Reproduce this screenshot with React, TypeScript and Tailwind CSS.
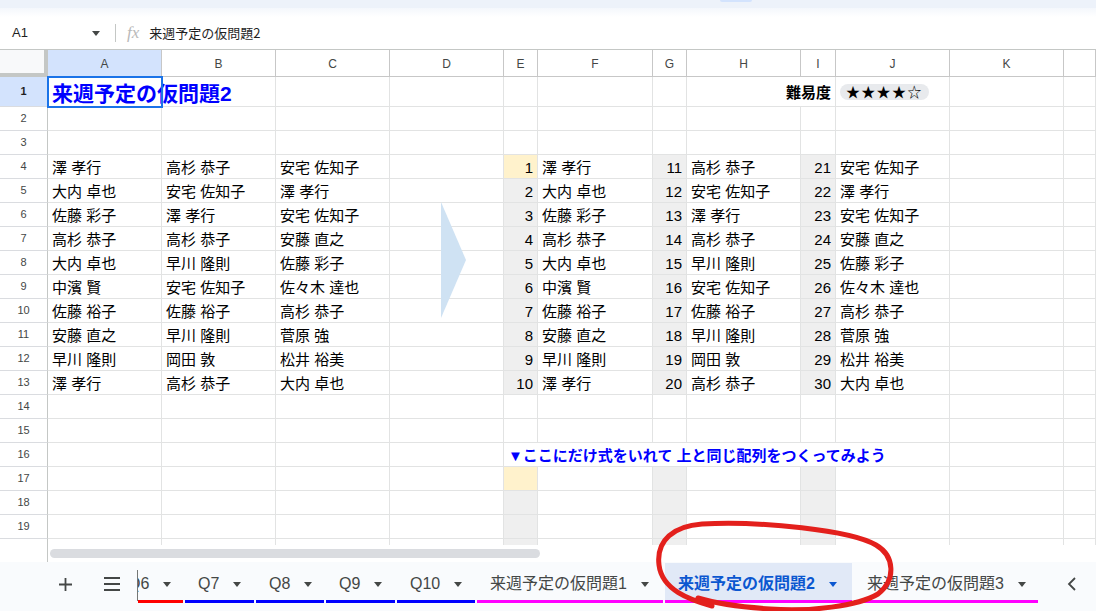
import type { ReactNode } from "react";

const COL_A = ["澤 孝行", "大内 卓也", "佐藤 彩子", "高杉 恭子", "大内 卓也", "中濱 賢", "佐藤 裕子", "安藤 直之", "早川 隆則", "澤 孝行"];
const COL_B = ["高杉 恭子", "安宅 佐知子", "澤 孝行", "高杉 恭子", "早川 隆則", "安宅 佐知子", "佐藤 裕子", "早川 隆則", "岡田 敦", "高杉 恭子"];
const COL_C = ["安宅 佐知子", "澤 孝行", "安宅 佐知子", "安藤 直之", "佐藤 彩子", "佐々木 達也", "高杉 恭子", "菅原 強", "松井 裕美", "大内 卓也"];

const LETTERS = ["A", "B", "C", "D", "E", "F", "G", "H", "I", "J", "K", ""];
const GRID = "grid grid-cols-[48px_114px_114px_114px_114px_34px_115px_34px_114px_35px_114px_114px_1fr]";

type CellSpec = { content?: ReactNode; bg?: string; right?: boolean; noR?: boolean };

function spec(r: number, c: number): CellSpec {
  if (r === 1) {
    if (c === 0)
      return {
        content: <span className="pt-[2px] text-[21px] font-bold text-[#0000ff]">来週予定の仮問題2</span>,
      };
    if (c === 7) return { noR: true };
    if (c === 8) return { content: <span className="text-[15px] font-bold text-black">難易度</span>, right: true };
    if (c === 9)
      return {
        content: (
          <span className="rounded-full bg-[#e8eaed] px-[6px] py-[1px] text-[14px] tracking-[1.3px] text-black">
            ★★★★☆
          </span>
        ),
      };
  }
  if (r >= 4 && r <= 13) {
    const i = r - 4;
    if (c === 0 || c === 5) return { content: COL_A[i] };
    if (c === 1 || c === 7) return { content: COL_B[i] };
    if (c === 2 || c === 9) return { content: COL_C[i] };
    if (c === 4) return { content: i + 1, right: true, bg: i === 0 ? "bg-[#fff2cc]" : "bg-[#efefef]" };
    if (c === 6) return { content: i + 11, right: true, bg: "bg-[#efefef]" };
    if (c === 8) return { content: i + 21, right: true, bg: "bg-[#efefef]" };
  }
  if (r === 16) {
    if (c === 4)
      return {
        content: (
          <span className="text-[15px] font-bold text-[#0000ff]">▼ここにだけ式をいれて 上と同じ配列をつくってみよう</span>
        ),
        noR: true,
      };
    if (c >= 5 && c <= 8) return { noR: true };
  }
  if (r >= 17) {
    if (c === 4) return { bg: r === 17 ? "bg-[#fff2cc]" : "bg-[#efefef]" };
    if (c === 6 || c === 8) return { bg: "bg-[#efefef]" };
  }
  return {};
}

function Row({ r }: { r: number }) {
  const sel = r === 1;
  return (
    <div className={`${GRID} ${r === 1 ? "h-[30px]" : "h-[24px]"}`}>
      <div
        className={`flex items-center justify-center border-r border-b border-r-[#c4c7c5] border-b-[#dadce0] text-[11px] ${
          sel ? "bg-[#d3e3fd] font-bold text-[#1f1f1f]" : "text-[#444746]"
        }`}
      >
        {r}
      </div>
      {LETTERS.map((_, c) => {
        const s = spec(r, c);
        return (
          <div
            key={c}
            className={`flex items-center whitespace-nowrap border-b border-[#e2e3e3] px-[4px] pt-[1px] text-[15px] leading-none text-black ${
              s.noR ? "" : "border-r"
            } ${s.right ? "justify-end" : ""} ${s.bg ?? ""}`}
          >
            {s.content}
          </div>
        );
      })}
    </div>
  );
}

function Triangle() {
  return <span className="h-0 w-0 border-x-[4px] border-t-[5px] border-x-transparent border-t-[#444746]" />;
}

function Tab({
  label,
  w,
  line,
  active,
  first,
}: {
  label: string;
  w: string;
  line: string;
  active?: boolean;
  first?: boolean;
}) {
  return (
    <div className={`flex shrink-0 flex-col ${w} ${first ? "ml-[-23px]" : ""}`}>
      <div
        className={`flex h-[37px] items-center pl-[13px] pt-[5px] text-[16px] ${
          active ? "bg-[#e1e9f7] font-bold text-[#0b57d0]" : "text-[#444746]"
        }`}
      >
        <span>{label}</span>
        <span
          className={`ml-[14px] h-0 w-0 border-x-[4px] border-t-[5px] border-x-transparent ${
            active ? "border-t-[#0b57d0]" : "border-t-[#444746]"
          }`}
        />
      </div>
      <div className={`h-[3px] ${line}`} />
    </div>
  );
}

export default function App() {
  return (
    <div className="relative h-[611px] w-[1096px] overflow-hidden bg-white font-['Liberation_Sans','Noto_Sans_CJK_JP',sans-serif] text-[#1f1f1f]">
      {/* toolbar remnant */}
      <div className="relative h-[8px] bg-[#edf2fa]">
        <div className="absolute left-[720px] top-0 h-[2px] w-[32px] rounded-b bg-[#d3e3fd]" />
      </div>
      <div className="h-[9px] bg-gradient-to-b from-[#f4f7fc] to-white" />

      {/* formula bar */}
      <div className="flex h-[32px] items-center text-[13px]">
        <span className="ml-[12px] w-[80px]">A1</span>
        <Triangle />
        <span className="ml-[15px] h-[18px] w-px bg-[#c4c7c5]" />
        <span className="ml-[11px] font-['Liberation_Serif',serif] text-[17px] italic text-[#b9b9b9]">fx</span>
        <span className="ml-[10px] font-['Noto_Sans_CJK_JP',sans-serif] text-[13px]">来週予定の仮問題2</span>
      </div>

      {/* grid */}
      <div className="h-[496px] overflow-hidden">
        <div className={`${GRID} h-[28px] border-t border-[#c4c7c5]`}>
          <div className="border-r-[4px] border-b-[4px] border-[#c4c7c5] bg-[#f8f9fa]" />
          {LETTERS.map((l, c) => (
            <div
              key={c}
              className={`flex items-center justify-center border-r border-b border-[#c7c7c7] pt-[1px] text-[12px] text-[#444746] ${
                c === 0 ? "bg-[#d3e3fd]" : ""
              }`}
            >
              {l}
            </div>
          ))}
        </div>
        {Array.from({ length: 20 }, (_, i) => (
          <Row key={i} r={i + 1} />
        ))}
      </div>

      {/* horizontal scroll */}
      <div className="flex h-[17px] items-center">
        <div className="h-full w-[48px] border-r border-[#c4c7c5]" />
        <div className="ml-[2px] h-[9px] w-[490px] rounded-full bg-[#dadce0]" />
      </div>

      {/* sheet tabs */}
      <div className="flex h-[49px] items-start bg-[#f9fbfd] pt-[1px]">
        <div className="flex h-[37px] w-[137px] items-center pt-[5px]">
          <svg className="ml-[59px]" width="13" height="13" viewBox="0 0 13 13">
            <path d="M6.5 0v13M0 6.5h13" stroke="#444746" strokeWidth="1.8" />
          </svg>
          <svg className="ml-[32px]" width="16" height="14" viewBox="0 0 16 14">
            <path d="M0 1h16M0 7h16M0 13h16" stroke="#444746" strokeWidth="1.8" />
          </svg>
        </div>
        <div className="mt-[7px] h-[31px] w-px bg-[#747775]" />
        <div className="flex w-[910px] gap-[2px] overflow-hidden">
          <Tab label="Q6" w="w-[68px]" line="bg-[#ff0000]" first />
          <Tab label="Q7" w="w-[69px]" line="bg-[#0000ff]" />
          <Tab label="Q8" w="w-[68px]" line="bg-[#0000ff]" />
          <Tab label="Q9" w="w-[69px]" line="bg-[#0000ff]" />
          <Tab label="Q10" w="w-[78px]" line="bg-[#0000ff]" />
          <Tab label="来週予定の仮問題1" w="w-[186px]" line="bg-[#ff00ff]" />
          <Tab label="来週予定の仮問題2" w="w-[187px]" line="bg-[#ff00ff]" active />
          <Tab label="来週予定の仮問題3" w="w-[184px]" line="bg-[#ff00ff]" />
        </div>
        <div className="flex h-[37px] flex-1 items-center justify-center pt-[5px]">
          <svg width="10" height="14" viewBox="0 0 10 14">
            <path d="M8 1L2 7l6 6" fill="none" stroke="#444746" strokeWidth="1.8" />
          </svg>
        </div>
      </div>

      {/* selection box on A1 */}
      <div className="pointer-events-none absolute left-[47px] top-[76px] h-[32px] w-[116px] border-2 border-[#1a73e8]" />

      {/* drawings over the sheet */}
      <svg className="pointer-events-none absolute left-0 top-0" width="1096" height="611">
        <polygon points="441,202 466,260 441,318" fill="#cfe2f3" />
        <path
          d="M712 606 C690 600 662 590 659 565 C656 540 674 526 702 524 C762 521 850 530 876 545 C895 556 896 580 878 594 C858 606 810 612 770 609 C740 607 715 603 698 598"
          fill="none"
          stroke="#e3201c"
          strokeWidth="5"
          strokeLinecap="round"
        />
      </svg>
    </div>
  );
}
